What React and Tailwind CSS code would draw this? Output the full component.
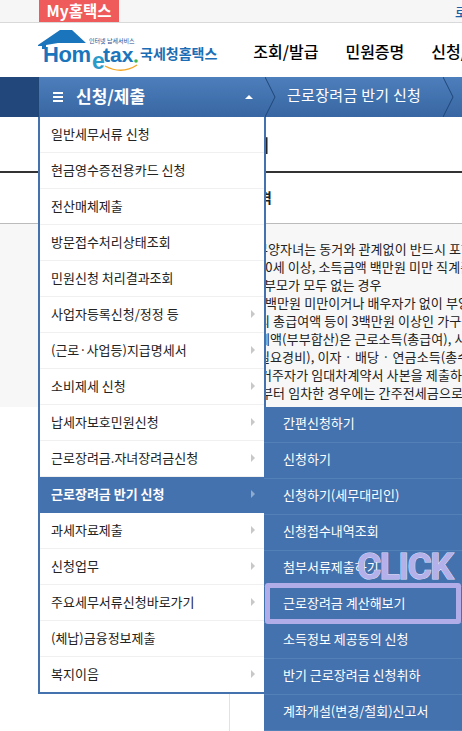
import React from "react";

const menuItems = [
  { label: "일반세무서류 신청" },
  { label: "현금영수증전용카드 신청" },
  { label: "전산매체제출" },
  { label: "방문접수처리상태조회" },
  { label: "민원신청 처리결과조회" },
  { label: "사업자등록신청/정정 등", arrow: true },
  { label: "(근로·사업등)지급명세서", arrow: true },
  { label: "소비제세 신청", arrow: true },
  { label: "납세자보호민원신청", arrow: true },
  { label: "근로장려금.자녀장려금신청", arrow: true },
  { label: "근로장려금 반기 신청", arrow: true, active: true },
  { label: "과세자료제출", arrow: true },
  { label: "신청업무", arrow: true },
  { label: "주요세무서류신청바로가기", arrow: true },
  { label: "(체납)금융정보제출" },
  { label: "복지이음", arrow: true },
];

const subItems = [
  "간편신청하기",
  "신청하기",
  "신청하기(세무대리인)",
  "신청접수내역조회",
  "첨부서류제출하기",
  "근로장려금 계산해보기",
  "소득정보 제공동의 신청",
  "반기 근로장려금 신청취하",
  "계좌개설(변경/철회)신고서",
];

// each line starts at its own x, the left part hides under the menu
const noticeLines = [
  { text: "부양자녀는 동거와 관계없이 반드시 포함", cls: "pl-[256px]" },
  { text: "70세 이상, 소득금액 백만원 미만 직계존속", cls: "pl-[258px]" },
  { text: "부모가 모두 없는 경우", cls: "pl-[264px]" },
  { text: "백만원 미만이거나 배우자가 없이 부양자녀", cls: "pl-[265px]" },
  { text: "의 총급여액 등이 3백만원 이상인 가구원", cls: "pl-[258px]" },
  { text: "계액(부부합산)은 근로소득(총급여), 사업", cls: "pl-[258px]" },
  { text: "필요경비), 이자 · 배당 · 연금소득(총수입", cls: "pl-[258px]" },
  { text: "거주자가 임대차계약서 사본을 제출하는", cls: "pl-[260px]" },
  { text: "부터 임차한 경우에는 간주전세금으로 계산", cls: "pl-[261px]" },
];

function Logo() {
  return (
    <svg width="102" height="54" viewBox="0 0 102 54" className="shrink-0">
      <polygon points="0,22 22,7 34,7 48,20 20,20 8,22 8,26 4,26 4,23 0,23" fill="#1b75bc" />
      <text x="5" y="39" fontFamily="Liberation Sans" fontWeight="700" fontSize="22" textLength="48" fill="#1b75bc">Hom</text>
      <text x="54" y="46" fontFamily="Liberation Sans" fontWeight="700" fontSize="23" fill="#2a9bc9">e</text>
      <text x="65" y="39" fontFamily="Liberation Sans" fontWeight="700" fontSize="21" fill="#1b75bc">tax</text>
      <text x="51" y="20" fontFamily="Noto Sans CJK KR" fontSize="6" fill="#1d4f91">인터넷 납세서비스</text>
      <circle cx="98" cy="38" r="1.8" fill="#3db54a" />
      <path d="M67 43 Q84 52 99 42" fill="none" stroke="#f5a623" strokeWidth="1.4" />
    </svg>
  );
}

function Chevron() {
  return (
    <svg width="11" height="40" viewBox="0 0 11 40" className="shrink-0">
      <path d="M0 0 L10 20 L0 40" fill="none" stroke="#1f4677" strokeWidth="1" />
    </svg>
  );
}

export default function App() {
  return (
    <div className="relative h-[731px] w-[462px] overflow-hidden bg-white font-['Noto_Sans_CJK_KR',sans-serif] text-[13px] text-[#222]">
      {/* TOP STRIP */}
      <div className="flex h-[23px] items-start border-b border-[#d9d9d9] bg-[#f6f6f6] pl-[39px]">
        <div className="flex h-[22px] w-[80px] shrink-0 items-center justify-center bg-[#ef5a5a] text-[15.5px] font-semibold text-white">
          My홈택스
        </div>
        <span className="ml-[336px] shrink-0 whitespace-nowrap pt-[2px] font-medium text-[#1a5fa8]">로그인</span>
      </div>

      {/* HEADER */}
      <div className="flex h-[54px] items-center pl-[38px]">
        <Logo />
        <span className="shrink-0 whitespace-nowrap pt-[6px] text-[14px] font-bold text-[#1b6db5]">국세청홈택스</span>
        <nav className="ml-[36px] flex shrink-0 gap-[27px] whitespace-nowrap pt-[2px] text-[16px] font-medium text-black">
          <span>조회/발급</span>
          <span>민원증명</span>
          <span>신청/제출</span>
        </nav>
      </div>

      {/* BLUE BAR */}
      <div className="flex h-[40px] bg-gradient-to-b from-[#4d7fbc] to-[#3866a2] text-white">
        <div className="w-[38px] shrink-0 bg-[#22477a]" />
        <div className="flex w-[227px] shrink-0 items-center border-l border-[#1f4677] pl-[14px] pr-[12px]">
          <div className="flex h-[10px] w-[10px] flex-col justify-between">
            <div className="h-[2px] bg-white" />
            <div className="h-[2px] bg-white" />
            <div className="h-[2px] bg-white" />
          </div>
          <span className="ml-[13px] pb-[2px] text-[17px] font-semibold">신청/제출</span>
          <div className="ml-auto h-0 w-0 border-x-[4px] border-b-[4px] border-x-transparent border-b-white" />
        </div>
        <Chevron />
        <span className="ml-[11px] w-[156px] shrink-0 self-center whitespace-nowrap pb-[4px] text-[15px] tracking-[0.3px]">근로장려금 반기 신청</span>
        <Chevron />
      </div>

      {/* PAGE CONTENT (mostly covered by the menus) */}
      <div className="flex h-[54px] w-[269px] items-center justify-end overflow-hidden">
        <span className="whitespace-nowrap pt-[1px] text-[17px] font-bold">근로장려금 안내</span>
      </div>
      <div className="h-[2px] bg-[#333]" />
      <div className="flex h-[50px] w-[272px] items-center justify-end overflow-hidden pb-[2px]">
        <span className="whitespace-nowrap text-[14px] font-bold">신청자격</span>
      </div>
      <div className="h-[184px] overflow-hidden border-t border-[#bbb] bg-[#f7f7f7] pt-[16px] leading-[18px] tracking-[0.1px]">
        {noticeLines.map((line) => (
          <div key={line.text} className={`whitespace-nowrap ${line.cls}`}>
            {line.text}
          </div>
        ))}
      </div>
      <div className="h-[324px] w-[230px] border-r border-[#e2e2e2] pl-[115px] pt-[269px] font-bold leading-[18px]">
        신청서
      </div>

      {/* MAIN MENU */}
      <div className="absolute left-[38px] top-[117px] w-[228px] border-x-2 border-b-2 border-[#4472ae] bg-white">
        {menuItems.map((item) => (
          <div
            key={item.label}
            className={`flex h-9 items-center border-b pb-[2px] pl-[11px] pr-[9px] last:h-[35px] last:border-b-0 ${
              item.active ? "border-[#4472ae] bg-[#4472ae] font-bold text-white" : "border-[#f0f0f0]"
            }`}
          >
            <span className="whitespace-nowrap">{item.label}</span>
            {item.arrow && (
              <div
                className={`ml-auto h-0 w-0 border-y-[4px] border-l-[4px] border-y-transparent ${
                  item.active ? "border-l-[#8fabd0]" : "border-l-[#c8c8c8]"
                }`}
              />
            )}
          </div>
        ))}
      </div>

      {/* SUB MENU */}
      <div className="absolute left-[264px] top-[407px] w-[198px] bg-[#4472ae] text-white">
        {subItems.map((label) => (
          <div key={label} className="flex h-9 items-center whitespace-nowrap border-b border-[#5480b8] pb-[3px] pl-[19px]">
            {label}
          </div>
        ))}
      </div>

      {/* CLICK HIGHLIGHT */}
      <div className="absolute left-[265px] top-[583px] h-[41px] w-[196px] rounded-[3px] border-[5px] border-[#b0ade9]" />
      <div className="absolute left-[357px] top-[545px] font-['Roboto',sans-serif] text-[37px] font-bold leading-[44px] tracking-[-1.5px] text-[#b3b0ea] [-webkit-text-stroke:1px_#e4e4fc] [paint-order:stroke_fill]">
        CLICK
      </div>
    </div>
  );
}
